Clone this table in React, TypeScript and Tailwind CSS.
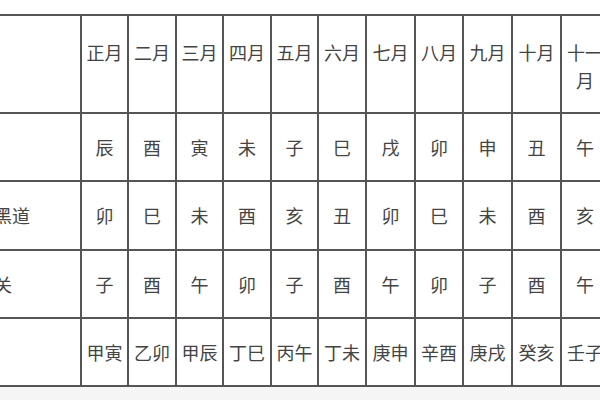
import React from 'react';

const months = ['正月', '二月', '三月', '四月', '五月', '六月', '七月', '八月', '九月', '十月', '十一月'];

const rows: { label: string; cells: string[] }[] = [
  { label: '天德', cells: ['辰', '酉', '寅', '未', '子', '巳', '戌', '卯', '申', '丑', '午'] },
  { label: '天刑黑道', cells: ['卯', '巳', '未', '酉', '亥', '丑', '卯', '巳', '未', '酉', '亥'] },
  { label: '桃花关', cells: ['子', '酉', '午', '卯', '子', '酉', '午', '卯', '子', '酉', '午'] },
  { label: '月建', cells: ['甲寅', '乙卯', '甲辰', '丁巳', '丙午', '丁未', '庚申', '辛酉', '庚戌', '癸亥', '壬子'] },
];

export default function App() {
  return (
    <div
      className="w-[600px] h-[400px] overflow-hidden bg-white flex flex-col text-[#444] text-[18px]"
      style={{ fontFamily: '"Noto Sans CJK SC", "Noto Sans", sans-serif' }}
    >
      <div className="mt-[14px] ml-[-51px] w-max bg-[#555] p-[2px] grid gap-[2px] grid-cols-[129px_45px_46px_45px_46px_45px_46px_47px_46px_47px_47px_46px] grid-rows-[96px_66px_67px_66px_66px]">
        <div className="bg-white pl-[6px] pt-[22px] leading-[28px]">月份</div>
        {months.map((m) => (
          <div key={m} className="bg-white pt-[22px] leading-[28px] text-center">
            {m}
          </div>
        ))}
        {rows.map((row) => (
          <React.Fragment key={row.label}>
            <div className="bg-white pl-[7px] flex items-center whitespace-nowrap">{row.label}</div>
            {row.cells.map((c, i) => (
              <div key={i} className="bg-white flex items-center justify-center whitespace-nowrap">
                {c}
              </div>
            ))}
          </React.Fragment>
        ))}
      </div>
      <div className="flex-1 bg-[#f5f5f5]" />
    </div>
  );
}
